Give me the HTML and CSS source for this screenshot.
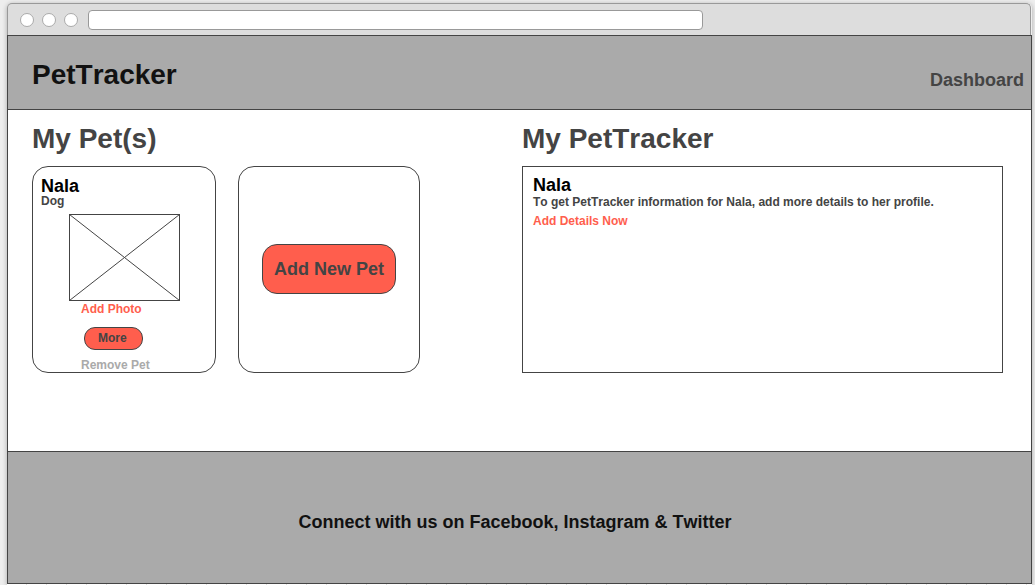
FILE: index.html
```html
<!DOCTYPE html>
<html lang="en">
<head>
<meta charset="utf-8">
<meta name="viewport" content="width=device-width, initial-scale=1">
<title>PetTracker</title>
<link rel="stylesheet" href="styles.css">
</head>
<body>
<div class="window">
  <div class="toolbar">
    <span class="dot"></span><span class="dot"></span><span class="dot"></span>
    <input class="address" type="text" aria-label="Address">
  </div>
  <div class="site">
    <header class="header">
      <h1 class="brand">PetTracker</h1>
      <nav><a class="nav-link" href="#">Dashboard</a></nav>
    </header>
    <main class="main">
      <section>
        <h2 class="heading">My Pet(s)</h2>
        <div class="cards">
          <article class="card pet">
            <h3 class="name">Nala</h3>
            <p class="kind">Dog</p>
            <svg class="photo" viewBox="0 0 111 87" role="img" aria-label="Pet photo">
              <rect x="0.5" y="0.5" width="110" height="86"/>
              <path d="M0.5 0.5L110.5 86.5M110.5 0.5L0.5 86.5"/>
            </svg>
            <div class="actions">
              <a class="link" href="#">Add Photo</a>
              <button class="button more" type="button">More</button>
              <a class="link remove" href="#">Remove Pet</a>
            </div>
          </article>
          <article class="card add">
            <button class="button add-pet" type="button">Add New Pet</button>
          </article>
        </div>
      </section>
      <section>
        <h2 class="heading">My PetTracker</h2>
        <article class="tracker">
          <h3 class="name">Nala</h3>
          <p class="info">To get PetTracker information for Nala, add more details to her profile.</p>
          <a class="link" href="#">Add Details Now</a>
        </article>
      </section>
    </main>
    <footer class="footer">
      <p class="connect">Connect with us on Facebook, Instagram &amp; Twitter</p>
    </footer>
  </div>
  <div class="ruler"></div>
</div>
</body>
</html>
```
FILE: styles.css
```css
* {
  box-sizing: border-box;
}

body {
  margin: 0;
  padding: 3px 3px 0 7px;
  background: #eeeeee;
  color: #444444;
  font-family: "Liberation Sans", Arial, sans-serif;
  font-size: 12px;
  font-weight: bold;
  font-kerning: none;
  line-height: 14px;
}

h1, h2, h3, p {
  margin: 0;
}

a {
  text-decoration: none;
}

.window {
  border-radius: 5px 5px 0 0;
  box-shadow: 0 1px 5px rgba(0, 0, 0, 0.3);
}

.toolbar {
  display: flex;
  align-items: center;
  gap: 8px;
  height: 32px;
  margin-right: 1px;
  padding: 0 12px;
  border: 1px solid #999999;
  border-bottom: 0;
  border-radius: 5px 5px 0 0;
  background: #dddddd;
}

.dot {
  width: 14px;
  height: 14px;
  border: 1px solid #aaaaaa;
  border-radius: 50%;
  background: #ffffff;
}

.address {
  width: 61.6%;
  height: 20px;
  margin-left: 2px;
  border: 1px solid #999999;
  border-radius: 4px;
  background: #ffffff;
}

.site {
  border: 1px solid #444444;
  background: #ffffff;
}

.header {
  display: flex;
  align-items: center;
  justify-content: space-between;
  padding: 23px 7px 18px 24px;
  border-bottom: 1px solid #444444;
  background: #aaaaaa;
}

.brand {
  color: #111111;
  font-size: 28px;
  line-height: 32px;
}

.nav-link {
  display: block;
  padding-top: 10px;
  color: #444444;
  font-size: 18px;
  line-height: 22px;
}

.main {
  display: grid;
  grid-template-columns: 490fr 481fr;
  min-height: 341px;
  padding: 13px 28px 0 24px;
}

.heading {
  margin-bottom: 11px;
  font-size: 28px;
  line-height: 32px;
}

.cards {
  display: grid;
  grid-template-columns: 184fr 182fr;
  gap: 22px;
  width: 79.2%;
}

.card {
  min-height: 207px;
  border: 1px solid #444444;
  border-radius: 16px;
}

.pet {
  display: flex;
  flex-direction: column;
  padding: 9px 8px 0;
}

.name {
  color: #000000;
  font-size: 18px;
  line-height: 20px;
}

.kind {
  margin-top: -2px;
}

.photo {
  width: 111px;
  height: 87px;
  margin: 6px 0 0 28px;
  fill: none;
  stroke: #444444;
}

.actions {
  display: flex;
  flex-direction: column;
  align-items: flex-start;
  padding: 1px 0 0 40px;
}

.link {
  color: #ff5e4d;
}

.remove {
  margin-top: 8px;
  color: #aaaaaa;
}

.button {
  border: 1px solid #444444;
  background: #ff5e4d;
  color: #444444;
  font: inherit;
}

.more {
  height: 23px;
  margin: 11px 0 0 3px;
  padding: 0 15px 2px 13px;
  border-radius: 11px;
}

.add {
  display: flex;
  align-items: center;
  justify-content: center;
  padding-bottom: 2px;
}

.add-pet {
  height: 50px;
  padding: 0 11px;
  border-radius: 15px;
  font-size: 18px;
}

.tracker {
  min-height: 207px;
  padding: 8px 10px;
  border: 1px solid #444444;
}

.info {
  margin-bottom: 5px;
}

.footer {
  padding: 60px 9px 50px 0;
  border-top: 1px solid #444444;
  background: #aaaaaa;
  color: #111111;
  text-align: center;
}

.connect {
  font-size: 18px;
  line-height: 21px;
}

.ruler {
  height: 1px;
  background: repeating-linear-gradient(90deg, #ffffff 0 19px, #dddddd 19px 20px);
}
```
